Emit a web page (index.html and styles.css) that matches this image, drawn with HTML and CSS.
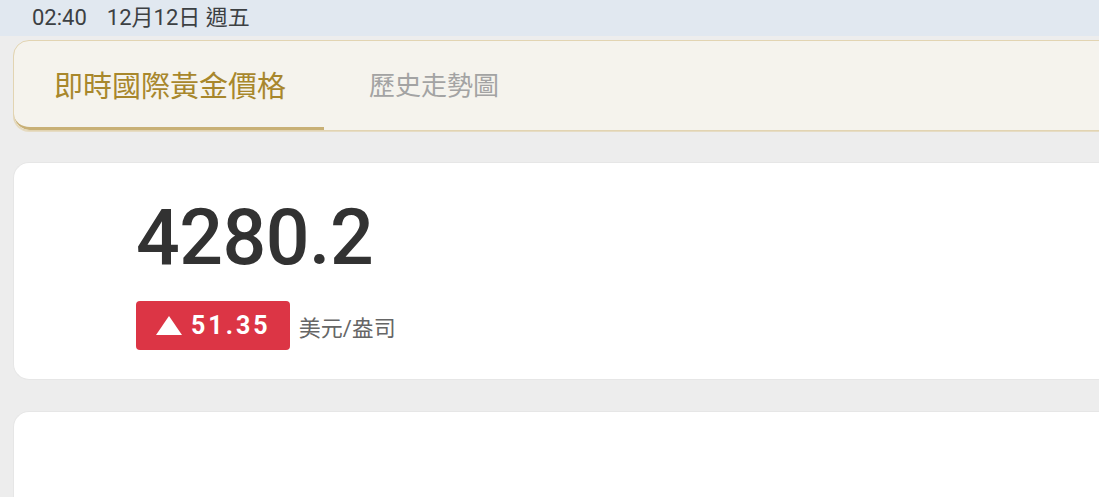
FILE: index.html
```html
<!DOCTYPE html>
<html lang="zh-Hant">
<head>
<meta charset="utf-8">
<title>即時國際黃金價格</title>
<link rel="stylesheet" href="styles.css">
</head>
<body>
<div class="statusbar">
  <span class="time">02:40</span>
  <span class="date">12月12日 週五</span>
</div>
<main class="page">
  <nav class="tabs">
    <div class="tab active">即時國際黃金價格</div>
    <div class="tab">歷史走勢圖</div>
  </nav>
  <section class="card price-card">
    <div class="price">4280.2</div>
    <div class="change-row">
      <span class="badge up"><svg class="arrow" width="26" height="19" viewBox="0 0 26 19" aria-hidden="true"><polygon points="13,0 26,19 0,19" fill="#fff"/></svg><span class="change">51.35</span></span>
      <span class="unit">美元/盎司</span>
    </div>
  </section>
  <section class="card empty-card"></section>
</main>
</body>
</html>
```
FILE: styles.css
```css
* { box-sizing: border-box; }
html, body { margin: 0; padding: 0; }
body {
  background: #ededed;
  font-family: Roboto, "Noto Sans CJK TC", "Noto Sans", sans-serif;
  width: 1099px;
  height: 497px;
  overflow: hidden;
}
.statusbar {
  height: 36px;
  background: #e1e8f0;
  color: #3c4043;
  font-size: 22px;
  line-height: 36px;
  padding-left: 32px;
  display: flex;
  gap: 20px;
}
.page {
  width: 1200px;
  padding: 4px 0 0 13px;
  display: flex;
  flex-direction: column;
  gap: 31px;
}
.tabs {
  display: flex;
  align-items: stretch;
  height: 91px;
  background: #f5f3ed;
  border: 1px solid #e2d4b2;
  border-radius: 16px 0 0 16px;
  overflow: hidden;
  box-shadow: 0 1px 0 #e6dcc4;
}
.tab {
  display: flex;
  align-items: center;
  font-size: 26px;
  color: #a3a3a3;
  padding: 0 0 1px 45px;
  border-bottom: 3px solid transparent;
}
.tab.active {
  width: 310px;
  padding-left: 40px;
  font-size: 29px;
  color: #a8872c;
  border-bottom: 3px solid #c8b076;
  border-bottom-left-radius: 16px;
}
.card {
  background: #fff;
  border: 1px solid #e6e6e6;
  border-right: none;
  border-radius: 16px 0 0 16px;
}
.price-card {
  height: 218px;
  padding: 30px 0 0 122px;
}
.price {
  font-size: 77px;
  font-weight: 500;
  color: #323232;
  line-height: 90px;
  letter-spacing: -0.5px;
}
.change-row {
  display: flex;
  align-items: center;
  gap: 9px;
  margin-top: 18px;
}
.badge {
  display: inline-flex;
  align-items: center;
  height: 49px;
  padding: 0 19px 0 20px;
  border-radius: 4px;
  background: #dc3545;
  color: #fff;
  font-size: 25px;
  font-weight: 700;
  letter-spacing: 3px;
}
.arrow {
  display: block;
  margin-right: 9px;
}
.unit {
  font-size: 22px;
  color: #666;
}
.empty-card {
  height: 120px;
}
```
